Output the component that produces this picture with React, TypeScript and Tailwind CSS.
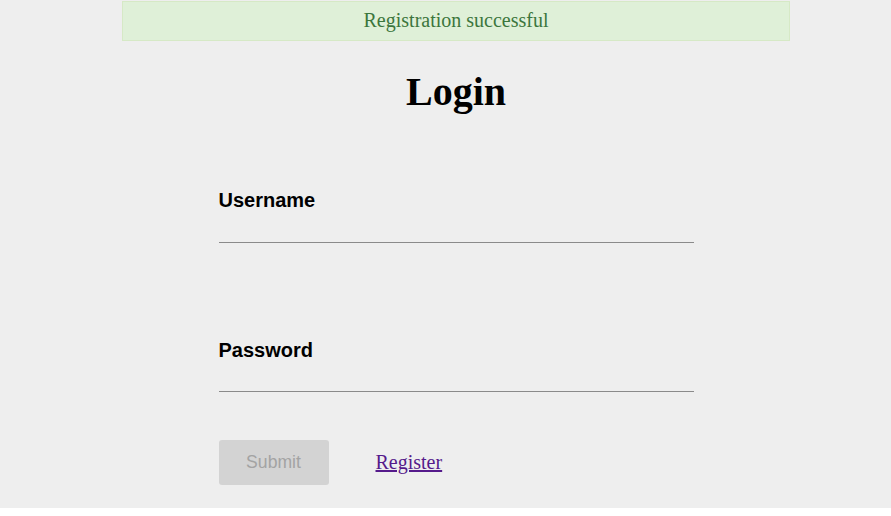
export default function App() {
  return (
    <div className="w-[891px] h-[516px] bg-white">
      <div className="h-[508px] bg-[#eeeeee] pt-px">
        <div className="ml-[122px] w-[668px]">
          <div className="h-[40px] border border-[#d6e9c6] bg-[#dff0d8] flex items-center justify-center text-[20px] text-[#3c763d] pb-[2px]" style={{ fontFamily: '"Liberation Serif", serif' }}>
            Registration successful
          </div>
          <h1 className="text-center text-[40px] font-bold text-black mt-[28px] leading-[46px]" style={{ fontFamily: '"Liberation Serif", serif' }}>
            Login
          </h1>
          <div className="mx-auto w-[475px] mt-[74px]" style={{ fontFamily: '"Liberation Sans", sans-serif' }}>
            <label className="block text-[20px] font-bold text-black leading-[23px]">Username</label>
            <input className="block w-full h-[30px] mt-[1px] bg-transparent border-0 border-b border-[#8a8a8a] outline-none" />
            <label className="block text-[20px] font-bold text-black leading-[23px] mt-[96px]">Password</label>
            <input type="password" className="block w-full h-[30px] mt-0 bg-transparent border-0 border-b border-[#8a8a8a] outline-none" />
            <div className="flex items-center mt-[48px]">
              <button className="w-[110px] h-[45px] rounded-[3px] bg-[#d3d3d3] text-[#a3a3a3] text-[17.6px]">Submit</button>
              <a href="#" className="ml-[47px] text-[20px] text-[#551a8b] underline pb-[2px]" style={{ fontFamily: '"Liberation Serif", serif' }}>Register</a>
            </div>
          </div>
        </div>
      </div>
    </div>
  );
}
